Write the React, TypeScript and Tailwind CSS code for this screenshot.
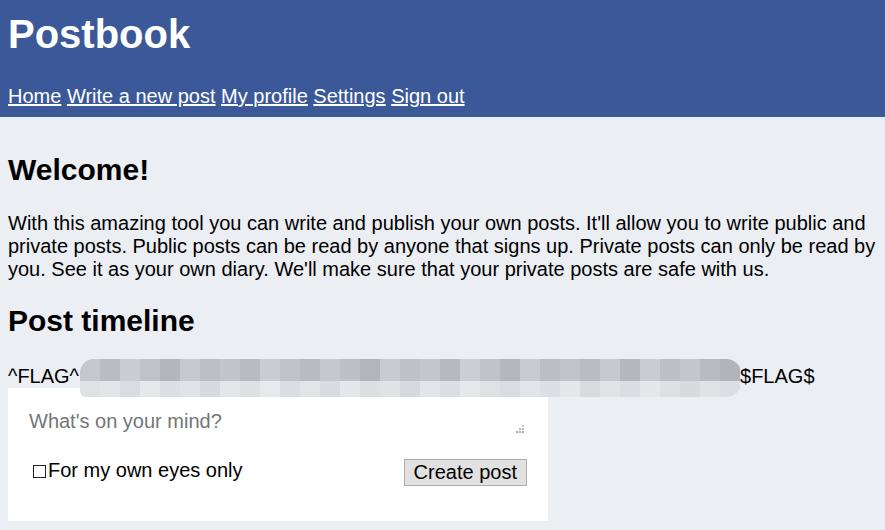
import React from "react";

const topShades = [
  "#c4c7cc", "#b9bcc1", "#c9ccd1", "#bfc2c7", "#b3b6bb", "#c6c9ce", "#bcbfc4", "#c2c5ca",
  "#b8bbc0", "#cacdd2", "#c0c3c8", "#b7bac0", "#c5c8cd", "#bdc0c5", "#b2b5ba", "#c8cbd0",
  "#bec1c6", "#c3c6cb", "#b6b9be", "#cbced3", "#bfc2c7", "#b4b7bc", "#c7cacf", "#bbbec3",
  "#c1c4c9", "#b9bcc1", "#c6c9ce", "#b5b8bd", "#c9ccd1", "#bdc0c5", "#c3c6cb", "#b8bbc0",
  "#b1b4b9",
];
const bottomShades = [
  "#dfe1e5", "#e3e5e8", "#d9dce0", "#e6e8eb", "#dcdfe3", "#e1e3e6", "#d7dadf", "#e4e6e9",
  "#dee0e4", "#e7e9ec", "#dadde1", "#e2e4e7", "#d8dbdf", "#e5e7ea", "#dddfe3", "#e0e2e6",
  "#d6d9dd", "#e3e5e9", "#dbdee2", "#e6e8eb", "#dfe1e5", "#d9dce0", "#e2e4e8", "#dcdfe3",
  "#e4e6e9", "#d8dbdf", "#e1e3e7", "#dadde1", "#e5e7ea", "#dee0e4", "#d7dadf", "#e0e2e6",
  "#dbdee2",
];

function Redaction() {
  return (
    <div className="absolute left-[72px] top-[-6px] w-[662px] h-[38px] rounded-tl-[14px] rounded-bl-[6px] rounded-r-[16px] overflow-hidden flex flex-col">
      <div className="flex h-[22px]">
        {topShades.map((c, i) => (
          <div key={i} className="w-[20px] h-full shrink-0" style={{ backgroundColor: c }} />
        ))}
      </div>
      <div className="flex h-[16px]">
        {bottomShades.map((c, i) => (
          <div key={i} className="w-[20px] h-full shrink-0" style={{ backgroundColor: c }} />
        ))}
      </div>
    </div>
  );
}

export default function App() {
  return (
    <div
      className="min-h-[530px] bg-[#ebeef3] text-black"
      style={{ fontFamily: '"Liberation Sans", Arial, sans-serif' }}
    >
      <header className="bg-[#3b5998] text-white px-2 pt-[11px] pb-[9px]">
        <h1 className="text-[40px] leading-[46px] font-bold">Postbook</h1>
        <nav className="mt-[28px] text-[20px] leading-[23px]">
          <a href="#" className="underline">Home</a>{" "}
          <a href="#" className="underline">Write a new post</a>{" "}
          <a href="#" className="underline">My profile</a>{" "}
          <a href="#" className="underline">Settings</a>{" "}
          <a href="#" className="underline">Sign out</a>
        </nav>
      </header>
      <main className="px-2 pb-2">
        <h2 className="mt-[36px] text-[30px] leading-[34px] font-bold">Welcome!</h2>
        <p className="mt-[25px] text-[20px] leading-[23px]">
          With this amazing tool you can write and publish your own posts. It'll allow you to write public and
          private posts. Public posts can be read by anyone that signs up. Private posts can only be read by
          you. See it as your own diary. We'll make sure that your private posts are safe with us.
        </p>
        <h2 className="mt-[23px] text-[30px] leading-[34px] font-bold">Post timeline</h2>
        <div className="relative mt-[27px]">
          <div className="text-[20px] leading-[23px] whitespace-nowrap">
            ^FLAG^<span className="inline-block w-[661px]"></span>$FLAG$
          </div>
          <div className="w-[540px] h-[133px] bg-white px-[20px] pt-[21px]">
            <div className="relative">
              <textarea
                placeholder="What's on your mind?"
                rows={1}
                className="block w-full h-[25px] resize-none outline-none border-0 p-0 pl-[1px] pt-[1px] text-[20px] leading-[23px] bg-white placeholder:text-[#757575]"
                style={{ fontFamily: '"Liberation Sans", Arial, sans-serif' }}
              />
              <svg
                className="absolute right-[3px] top-[16px]"
                width="9"
                height="8"
                viewBox="0 0 9 8"
              >
                <rect x="6" y="0" width="2" height="2" fill="#cfcfcf" />
                <rect x="3" y="3" width="2" height="2" fill="#b5b5b5" />
                <rect x="6" y="3" width="2" height="2" fill="#b5b5b5" />
                <rect x="0" y="6" width="2" height="2" fill="#a8a8a8" />
                <rect x="3" y="6" width="2" height="2" fill="#a8a8a8" />
                <rect x="6" y="6" width="2" height="2" fill="#a8a8a8" />
              </svg>
            </div>
            <div className="mt-[25px] flex justify-between items-start">
              <label className="flex items-center pl-[5px] text-[20px] leading-[23px]">
                <span className="inline-block w-[13px] h-[13px] border border-[#222] mr-[2px] mt-[2px]"></span>
                For my own eyes only
              </label>
              <button className="mr-[1px] h-[27px] px-[9px] bg-[#e1e1e1] border border-[#adadad] text-[20px] leading-[23px]">
                Create post
              </button>
            </div>
          </div>
          <Redaction />
        </div>
      </main>
    </div>
  );
}
